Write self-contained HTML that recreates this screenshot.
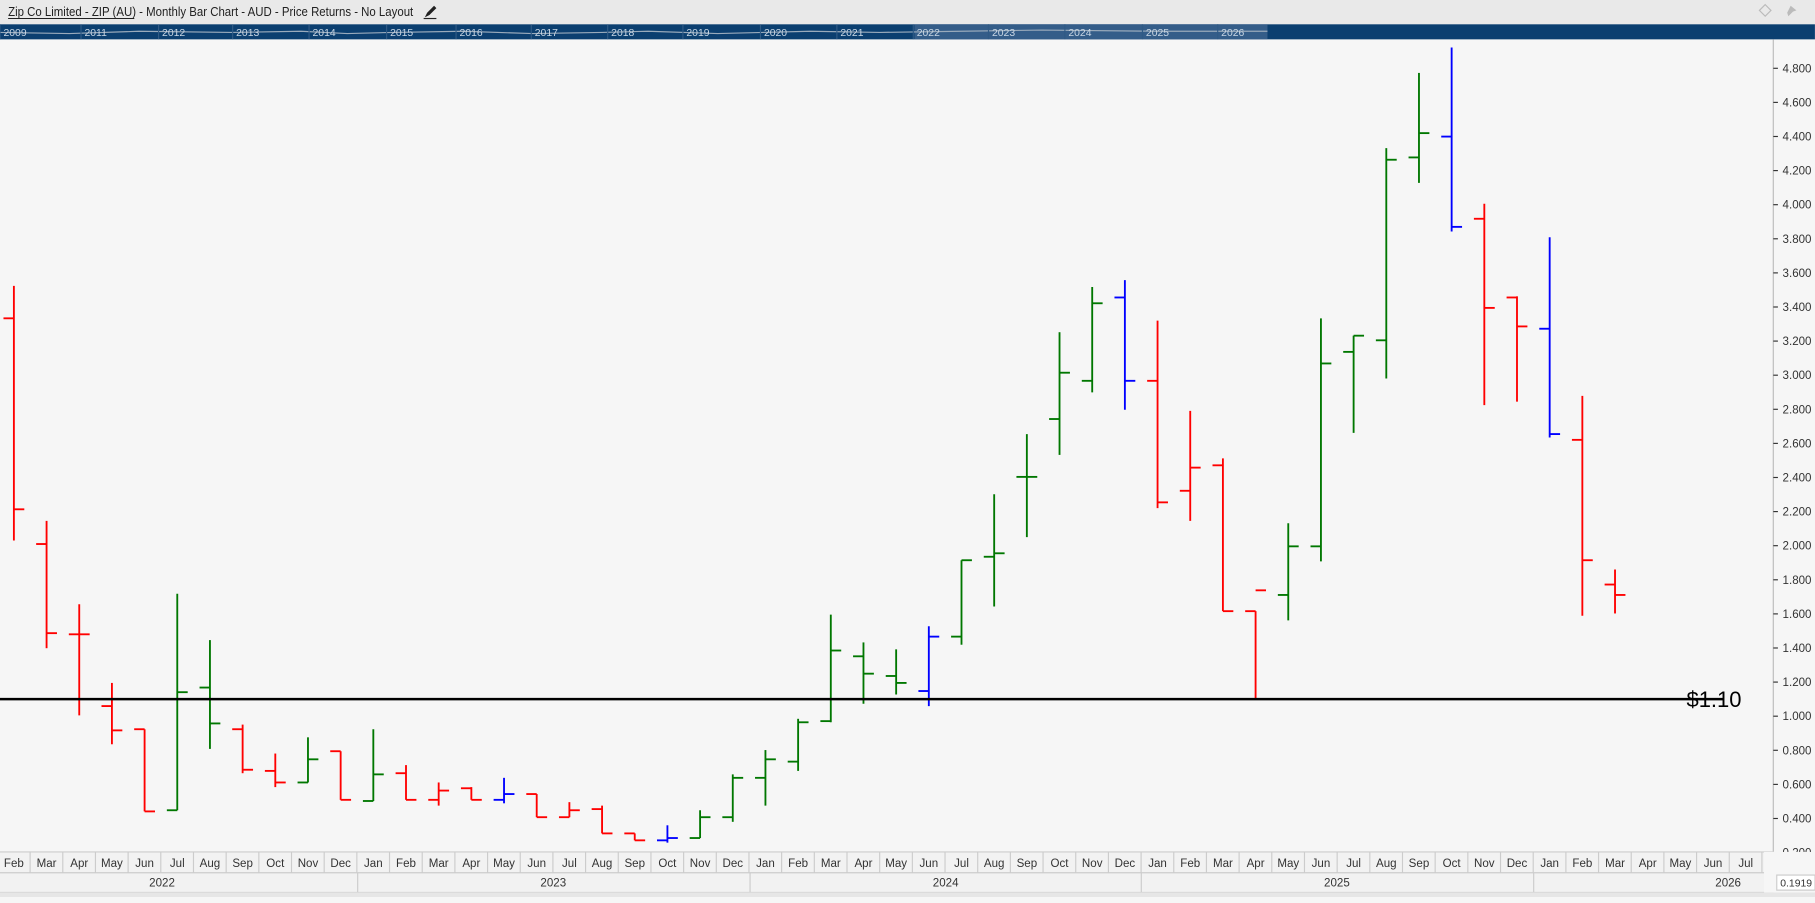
<!DOCTYPE html>
<html><head><meta charset="utf-8"><style>
html,body{margin:0;padding:0;width:1815px;height:897px;overflow:hidden;background:#f6f6f6;font-family:"Liberation Sans",sans-serif}
#w{position:absolute;left:0;top:0;width:1568px;height:775px;transform:scale(1.1575);transform-origin:0 0}
</style></head><body>
<div id="w"><svg id="s" width="1568" height="775" xmlns="http://www.w3.org/2000/svg" font-family="Liberation Sans, sans-serif"></svg></div>
<script>
const s=document.getElementById('s');let h='';
h+='<rect x="0" y="0" width="1568" height="21" fill="#e9e9e9"/>';
h+='<text x="7" y="14" font-size="11" fill="#222" textLength="350" lengthAdjust="spacingAndGlyphs">Zip Co Limited - ZIP (AU) - Monthly Bar Chart - AUD - Price Returns - No Layout</text>';
h+='<line x1="7" y1="16" x2="116" y2="16" stroke="#222" stroke-width="0.8"/>';
h+='<path d="M367 15 l2-4 6-6 2 2-6 6z" fill="#222"/><line x1="366" y1="16" x2="377" y2="16" stroke="#222"/>';
h+='<path d="M1525 4 l5 5-5 5-5-5z" fill="none" stroke="#bbb"/><path d="M1547 5 l5 4-3 1-4 4-1-3z" fill="#bbb"/>';
h+='<rect x="0" y="21" width="1568" height="13" fill="#0b3f70"/>';
h+='<rect x="790" y="21" width="305" height="13" fill="#3e6590" opacity="0.8"/>';
h+='<polyline points="0,28 60,29 120,27 200,28 260,27 300,29 340,28 400,27 460,29 520,28 560,27 620,29 700,27 760,28 830,27 900,26 1000,27 1095,27" fill="none" stroke="#9ab" stroke-width="1"/>';
const yrs=[[3,2009],[73,2011],[140,2012],[204,2013],[270,2014],[337,2015],[397,2016],[462,2017],[528,2018],[593,2019],[660,2020],[726,2021],[792,2022],[857,2023],[923,2024],[990,2025],[1055,2026]];
yrs.forEach(([x,y])=>{h+=`<line x1="${x-3}" y1="21" x2="${x-3}" y2="34" stroke="#2f5a85"/><text x="${x}" y="31" font-size="9" fill="#c8d6e4">${y}</text>`});
h+='<line x1="1532" y1="34" x2="1532" y2="736" stroke="#bbb"/>';
const Y=p=>59+(4.8-p)*147.3;
for(let v=4.8;v>0.15;v-=0.2){const y=Y(v);h+=`<line x1="1532" y1="${y}" x2="1536" y2="${y}" stroke="#333"/><text x="1540" y="${y+3.5}" font-size="10" fill="#333">${v.toFixed(3)}</text>`;}
const D=[['r',247,467,275,440],['r',450,560,470,547],['r',522,618,548,548],['r',590,643,610,631],['r',630,701,630,701],['g',513,700,700,598],['g',553,647,594,625],['r',626,668,630,665],['r',651,680,666,676],['g',637,676,676,656],['r',649,691,649,691],['g',630,692,692,669],['r',661,691,668,691],['r',676,696,691,683],['r',680,691,681,691],['b',672,694,691,686],['r',686,706,686,706],['r',693,706,706,700],['r',696,720,699,720],['r',720,726,720,726],['b',713,728,726,724],['g',700,724,724,706],['g',669,710,706,672],['g',648,696,672,656],['g',621,666,658,624],['g',531,624,623,562],['g',555,608,567,582],['g',561,600,584,590],['b',541,610,597,550],['g',484,557,550,484],['g',427,524,481,478],['g',375,464,412,412],['g',287,393,362,322],['g',248,339,329,262],['b',242,354,257,329],['r',277,439,329,434],['r',355,450,424,404],['r',396,528,402,528],['r',528,603,528,510],['g',452,536,514,472],['g',275,485,472,314],['g',290,374,304,290],['g',128,327,294,138],['g',63,158,136,115],['b',41,200,118,196],['r',176,350,189,266],['r',256,347,257,282],['b',205,378,284,375],['r',342,532,380,484],['r',492,530,505,514]];
const C={r:'#f00',g:'#070',b:'#00f'};
D.forEach((d,i)=>{const x=12+28.23*i,c=C[d[0]];h+=`<g stroke="${c}" stroke-width="1.6"><line x1="${x}" y1="${d[1]}" x2="${x}" y2="${d[2]}"/><line x1="${x-9}" y1="${d[3]}" x2="${x}" y2="${d[3]}"/><line x1="${x}" y1="${d[4]}" x2="${x+9}" y2="${d[4]}"/></g>`});
h+='<line x1="0" y1="604" x2="1489" y2="604" stroke="#000" stroke-width="2.2"/><text x="1457" y="611" font-size="19" fill="#000">$1.10</text>';
h+='<rect x="0" y="736" width="1532" height="35" fill="#f2f2f2"/><line x1="0" y1="736" x2="1532" y2="736" stroke="#ccc"/><line x1="0" y1="754" x2="1532" y2="754" stroke="#ccc"/><line x1="0" y1="771" x2="1532" y2="771" stroke="#ccc"/>';
h+='<rect x="0" y="771" width="1568" height="4" fill="#e6e6e6"/>';
const M=['Jan','Feb','Mar','Apr','May','Jun','Jul','Aug','Sep','Oct','Nov','Dec'];
for(let i=0;i<54;i++){const x=12+28.23*i;h+=`<text x="${x}" y="749" font-size="10" fill="#333" text-anchor="middle">${M[(i+1)%12]}</text><line x1="${x+14}" y1="736" x2="${x+14}" y2="754" stroke="#ccc"/>`;}
h+='<rect x="1524" y="736" width="44" height="35" fill="#f6f6f6"/>';
[[140,2022],[478,2023],[817,2024],[1155,2025],[1493,2026]].forEach(([x,y])=>h+=`<text x="${x}" y="766" font-size="10" fill="#333" text-anchor="middle">${y}</text>`);
[309,648,986,1325].forEach(x=>h+=`<line x1="${x}" y1="754" x2="${x}" y2="771" stroke="#ccc"/>`);
h+='<rect x="1535" y="756" width="33" height="13" fill="#fff" stroke="#ccc"/><text x="1538" y="766" font-size="9" fill="#333">0.1919</text>';
s.innerHTML=h;
</script></body></html>
